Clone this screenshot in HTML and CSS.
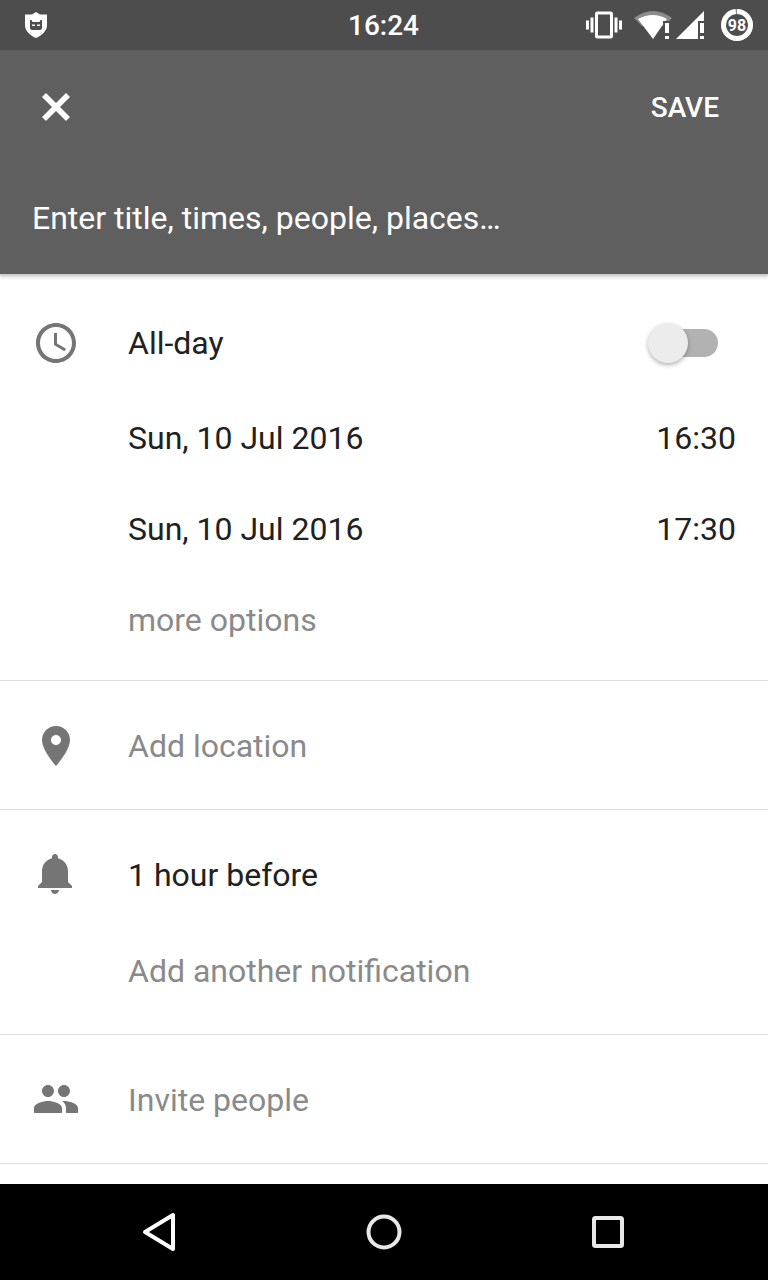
FILE: index.html
```html
<!DOCTYPE html>
<html>
<head>
    <title>New event</title>
    <link rel="stylesheet" href="styles.css">
</head>
<body>
    <div class="phone">
        <div class="status">
            <svg class="shield" width="22" height="26" viewBox="0 0 22 26">
                <path fill="#fff" d="M11 0l4 2.5h7V13c0 6-5 10.500-11 13C5 23.500 0 19 0 13V2.500h7z"/>
                <path fill="#4d4d4d" d="M5 8h1.500l1 2h7l1-2H17v8c0 1-1 2-2 2H7c-1 0-2-1-2-2z"/>
                <path fill="#fff" d="M7 12.500h3V14H7zM12 12.500h3V14h-3z"/>
            </svg>
            <span class="clock">16:24</span>
            <div class="status-icons">
                <svg class="vibrate" width="36" height="36" viewBox="0 0 24 24">
                    <path fill="#fff" d="M0 15h2V9H0v6zm3 2h2V7H3v10zm19-8v6h2V9h-2zm-3 8h2V7h-2v10zM16.5 3h-9C6.67 3 6 3.67 6 4.5v15c0 .83.67 1.5 1.5 1.5h9c.83 0 1.5-.67 1.5-1.500v-15c0-.83-.67-1.5-1.5-1.5zM16 19H8V5h8v14z"/>
                </svg>
                <svg class="wifi" width="38" height="28" viewBox="0 0 38 28">
                    <path fill="#8c8c8c" d="M0 7Q19-7 38 7L30 15H8z"/>
                    <path fill="#fff" d="M4 8Q19 0 33 8L30 12 19 28z"/>
                    <path fill="#4d4d4d" d="M29 10h9v18h-9z"/>
                    <path fill="#fff" d="M31 12h4v10h-4zM31 25h4v3h-4z"/>
                </svg>
                <svg class="signal" width="29" height="28" viewBox="0 0 29 28">
                    <path fill="#fff" d="M0 28L28 0v10h-6v18z"/>
                    <path fill="#fff" d="M24 12h4v10h-4zM24 25h4v3h-4z"/>
                </svg>
                <svg class="battery" width="34" height="34" viewBox="0 0 34 34">
                    <circle cx="17" cy="17" r="13.500" fill="none" stroke="#8c8c8c" stroke-width="5"/>
                    <circle cx="17" cy="17" r="13.500" fill="none" stroke="#fff" stroke-width="5" stroke-dasharray="83 85" transform="rotate(-90 17 17)"/>
                    <text x="17" y="22.700" text-anchor="middle" class="battery-text">98</text>
                </svg>
            </div>
        </div>

        <div class="toolbar">
            <div class="toolbar-top">
                <svg width="48" height="48" viewBox="0 0 24 24">
                    <path fill="none" stroke="#fff" stroke-width="2.800" d="M6 6l12 12M18 6L6 18"/>
                </svg>
                <span class="save">SAVE</span>
            </div>
            <div class="hint">Enter title, times, people, places…</div>
        </div>

        <div class="content">
            <div class="section section-time">
                <div class="row row-allday">
                    <svg class="icon" width="48" height="48" viewBox="0 0 24 24">
                        <path d="M11.99 2C6.47 2 2 6.48 2 12s4.47 10 9.99 10C17.52 22 22 17.52 22 12S17.52 2 11.99 2zM12 20c-4.42 0-8-3.58-8-8s3.58-8 8-8 8 3.58 8 8-3.58 8-8 8z"/>
                        <path d="M12.5 7H11v6l5.25 3.15.75-1.23-4.5-2.67z"/>
                    </svg>
                    <span class="label">All-day</span>
                    <div class="switch"><div class="thumb"></div></div>
                </div>
                <div class="row row-plain">
                    <span class="label indent">Sun, 10 Jul 2016</span>
                    <span class="time">16:30</span>
                </div>
                <div class="row row-plain">
                    <span class="label indent">Sun, 10 Jul 2016</span>
                    <span class="time">17:30</span>
                </div>
                <div class="row row-plain">
                    <span class="label indent muted">more options</span>
                </div>
            </div>

            <div class="section section-location">
                <div class="row">
                    <svg class="icon" width="48" height="48" viewBox="0 0 24 24">
                        <path d="M12 2C8.13 2 5 5.13 5 9c0 5.25 7 13 7 13s7-7.75 7-13c0-3.87-3.13-7-7-7zm0 9.5c-1.38 0-2.5-1.12-2.5-2.5s1.12-2.5 2.5-2.5 2.5 1.12 2.5 2.5-1.12 2.5-2.5 2.5z"/>
                    </svg>
                    <span class="label muted">Add location</span>
                </div>
            </div>

            <div class="section section-notify">
                <div class="row row-notify">
                    <svg class="icon icon-up" width="48" height="48" viewBox="0 0 24 24">
                        <path d="M11.5 22c1.1 0 2-.9 2-2h-4c0 1.100.9 2 2 2zm6.500-6v-5.500c0-3.070-2.130-5.640-5-6.320V3.500c0-.83-.67-1.500-1.500-1.500S10 2.670 10 3.500v.68c-2.870.68-5 3.250-5 6.320V16l-2 2v1h17v-1l-2-2z"/>
                    </svg>
                    <span class="label">1 hour before</span>
                </div>
                <div class="row row-notify">
                    <span class="label indent muted">Add another notification</span>
                </div>
            </div>

            <div class="section section-people">
                <div class="row">
                    <svg class="icon icon-up" width="48" height="48" viewBox="0 0 24 24">
                        <path d="M16 11c1.66 0 2.99-1.34 2.99-3S17.66 5 16 5c-1.66 0-3 1.34-3 3s1.34 3 3 3zm-8 0c1.66 0 2.99-1.34 2.99-3S9.66 5 8 5C6.34 5 5 6.34 5 8s1.34 3 3 3zm0 2c-2.33 0-7 1.17-7 3.5V19h14v-2.5c0-2.33-4.67-3.5-7-3.5zm8 0c-.29 0-.62.02-.97.05 1.16.84 1.97 1.97 1.97 3.45V19h6v-2.5c0-2.33-4.67-3.5-7-3.5z"/>
                    </svg>
                    <span class="label muted">Invite people</span>
                </div>
            </div>
        </div>

        <div class="navbar">
            <svg width="36" height="40" viewBox="0 0 36 40">
                <path fill="none" stroke="#fff" stroke-width="4" stroke-linejoin="round" d="M31 3v34L3 20z"/>
            </svg>
            <svg width="36" height="36" viewBox="0 0 36 36">
                <circle cx="18" cy="18" r="15.5" fill="none" stroke="#e8e8e8" stroke-width="4"/>
            </svg>
            <svg width="36" height="36" viewBox="0 0 36 36">
                <rect x="4" y="4" width="28" height="28" rx="1.5" fill="none" stroke="#e8e8e8" stroke-width="4"/>
            </svg>
        </div>
    </div>
</body>
</html>
```

FILE: styles.css
```css
body { margin: 0; background: #fff; font-family: Roboto, sans-serif; }
.phone { width: 768px; height: 1280px; display: flex; flex-direction: column; overflow: hidden; }

.status { height: 50px; flex: none; background: #4d4d4d; display: flex; align-items: center; justify-content: space-between; padding: 0 14px 0 25px; position: relative; }
.clock { position: absolute; left: 0; right: 1px; top: 9px; text-align: center; color: #fff; font-size: 28px; font-weight: 500; }
.status-icons { display: flex; align-items: center; }
.vibrate { margin-right: 12px; }
.wifi { margin-right: 4px; margin-top: -1px; }
.signal { margin-right: 15px; margin-top: -1px; }
.battery-text { fill: #fff; font-family: Roboto, sans-serif; font-size: 16px; font-weight: 700; }

.toolbar { height: 224px; flex: none; background: #5f5f5f; box-shadow: 0 2px 0 #cfcfcf, 0 4px 3px rgba(0, 0, 0, 0.12); position: relative; }
.toolbar-top { height: 114px; display: flex; align-items: center; justify-content: space-between; padding: 0 48px 0 32px; }
.save { color: #fff; font-size: 28px; font-weight: 500; margin-right: 1px; }
.hint { color: #fff; font-size: 32px; padding-left: 32px; line-height: 48px; margin-top: 30px; }

.content { flex: 1; }
.section { border-bottom: 1px solid #e0e0e0; box-sizing: border-box; }
.section-time { height: 407px; padding-top: 21px; }
.section-location { height: 129px; display: flex; align-items: center; padding-top: 1px; }
.section-notify { height: 225px; padding-top: 17px; }
.section-people { height: 129px; display: flex; align-items: center; padding-top: 2px; }

.row { display: flex; align-items: center; padding: 0 32px; width: 100%; box-sizing: border-box; }
.row-allday { height: 96px; margin-bottom: 1px; }
.row-plain { height: 91px; justify-content: space-between; }
.row-notify { height: 96px; }

.icon { fill: #757575; flex: none; margin-right: 48px; }
.icon-up { margin-bottom: 2px; }
.label { font-size: 32px; color: #212121; }
.indent { margin-left: 96px; }
.muted { color: #8a8a8a; }
.time { font-size: 32px; color: #212121; }

.switch { margin-left: auto; margin-right: 18px; width: 58px; height: 28px; border-radius: 14px; background: #b2b2b2; position: relative; }
.thumb { position: absolute; left: -12px; top: -6px; width: 40px; height: 40px; border-radius: 50%; background: #ececec; box-shadow: 0 2px 4px rgba(0, 0, 0, 0.3); }

.navbar { height: 96px; flex: none; background: #000; display: flex; align-items: center; justify-content: space-between; padding: 0 142px; }
```
